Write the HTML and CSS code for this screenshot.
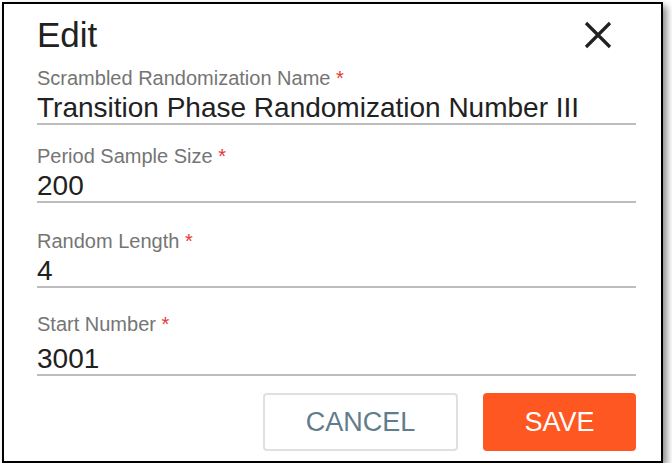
FILE: index.html
```html
<!DOCTYPE html>
<html>
<head>
<meta charset="utf-8">
<link rel="stylesheet" href="styles.css">
</head>
<body>
<div class="dialog">
  <div class="header">
    <h1 class="title">Edit</h1>
    <button class="close" aria-label="Close">
      <svg width="28" height="28" viewBox="0 0 28 28"><path d="M2 2 L26 26 M26 2 L2 26" stroke="#212121" stroke-width="3.2" fill="none"/></svg>
    </button>
  </div>
  <div class="field f1">
    <div class="label">Scrambled Randomization Name <span class="req">*</span></div>
    <div class="value">Transition Phase Randomization Number III</div>
  </div>
  <div class="field f2">
    <div class="label">Period Sample Size <span class="req">*</span></div>
    <div class="value">200</div>
  </div>
  <div class="field f3">
    <div class="label">Random Length <span class="req">*</span></div>
    <div class="value">4</div>
  </div>
  <div class="field f4">
    <div class="label">Start Number <span class="req">*</span></div>
    <div class="value">3001</div>
  </div>
  <div class="actions">
    <button class="btn cancel">CANCEL</button>
    <button class="btn save">SAVE</button>
  </div>
</div>
</body>
</html>
```
FILE: styles.css
```css
html, body {
  margin: 0;
  padding: 0;
  background: #ffffff;
}
body {
  font-family: "Liberation Sans", Arial, sans-serif;
}
.dialog {
  box-sizing: border-box;
  margin: 2px 0 0 2px;
  width: 661px;
  height: 461px;
  border: 2px solid #000;
  background: #fff;
  box-shadow: 4px 4px 7px rgba(0, 0, 0, 0.45);
  padding: 11px 25px 0 33px;
}
.header {
  display: flex;
  justify-content: space-between;
  align-items: center;
  height: 40px;
}
.title {
  margin: 0;
  font-size: 35px;
  line-height: 40px;
  font-weight: normal;
  color: #212121;
}
.close {
  border: 0;
  background: none;
  padding: 0;
  margin-right: 24px;
  width: 28px;
  height: 28px;
  display: flex;
}
.field {
  border-bottom: 2px solid #bdbdbd;
}
.f1 { margin-top: 11px; }
.f2 { margin-top: 19px; }
.f3 { margin-top: 26px; }
.f4 { margin-top: 24px; }
.label {
  font-size: 20px;
  line-height: 24px;
  color: #757575;
  margin-bottom: 3px;
}
.f4 .label { margin-bottom: 8px; }
.req {
  color: #e53935;
}
.value {
  font-size: 28px;
  line-height: 30px;
  color: #212121;
  white-space: nowrap;
}
.actions {
  display: flex;
  justify-content: flex-end;
  gap: 25px;
  margin-top: 17px;
}
.btn {
  box-sizing: border-box;
  height: 58px;
  border-radius: 4px;
  font-family: "Liberation Sans", Arial, sans-serif;
  font-size: 27px;
  padding: 0;
  cursor: pointer;
}
.cancel {
  width: 195px;
  background: #fff;
  border: 2px solid #e0e0e0;
  color: #5f7d8c;
}
.save {
  width: 153px;
  background: #ff5722;
  border: 0;
  color: #fff;
}
```
